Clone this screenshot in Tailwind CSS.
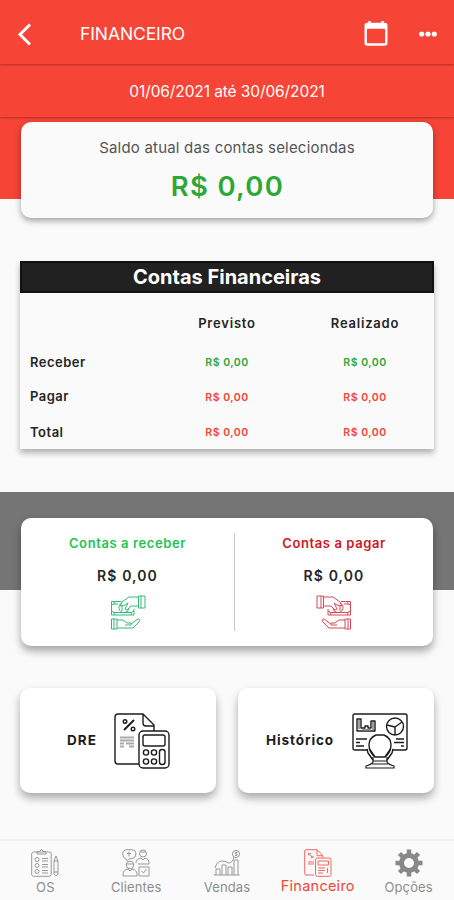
<!DOCTYPE html>
<html lang="pt-BR">
<head>
  <meta charset="UTF-8" />
  <meta name="viewport" content="width=device-width, initial-scale=1.0" />
  <title>Financeiro</title>
  <script src="https://cdn.jsdelivr.net/npm/@tailwindcss/browser@4"></script>
</head>
<body class="bg-[#fafafa] font-['Inter',sans-serif]">
  <div class="w-[454px] h-[900px] flex flex-col overflow-hidden">
    <!-- Top bar -->
    <header class="relative z-20 shrink-0 h-16 pt-[3px] bg-[#f64436] text-white flex items-center shadow-[0_1px_2px_rgba(0,0,0,0.3)]">
      <svg class="ml-[17px] w-4 h-6" viewBox="0 0 16 24" fill="none" stroke="currentColor" stroke-width="3"><path d="M13 2.5 3 12.5l10 10" /></svg>
      <h1 class="ml-[47px] text-[17.5px] leading-6 tracking-[-0.1px]">FINANCEIRO</h1>
      <svg class="ml-auto w-6 h-[27px]" viewBox="0 0 24 27" fill="none" stroke="currentColor"><rect x="1.7" y="4" width="20.6" height="20.5" rx="1.5" stroke-width="2.4" /><path d="M2 6.5h20" stroke-width="4.5" /><path d="M5.5 1v4M18.5 1v4" stroke-width="2.4" /></svg>
      <svg class="ml-[31px] mr-[17px] w-[18px] h-6" viewBox="0 0 18 24" fill="currentColor"><circle cx="2.7" cy="12" r="2.6" /><circle cx="9" cy="12" r="2.6" /><circle cx="15.3" cy="12" r="2.6" /></svg>
    </header>
    <div class="relative z-10 shrink-0 h-[53px] pt-0.5 bg-[#f64436] text-white flex items-center justify-center text-[15.5px] tracking-[-0.1px] shadow-[0_1px_2px_rgba(0,0,0,0.3)]">01/06/2021 até 30/06/2021</div>

    <main class="flex-1 flex flex-col">
      <section class="h-[82px] shrink-0 bg-[#f64436] px-[21px] pt-[5px]">
        <div class="relative h-24 rounded-[10px] bg-[#fafafa] flex flex-col items-center shadow-[0_3px_6px_rgba(0,0,0,0.35)]">
          <p class="mt-[14px] text-[15px] leading-6 tracking-[0.2px] text-[#555]">Saldo atual das contas seleciondas</p>
          <p class="mt-[10px] pl-px text-[27.5px] leading-8 font-semibold tracking-[1.3px] text-[#2fa737]">R$ 0,00</p>
        </div>
      </section>

      <!-- Contas financeiras -->
      <section class="mt-[62px] mx-5 h-[188px] shrink-0 bg-[#fafafa] shadow-[0_4px_6px_rgba(0,0,0,0.3)]">
        <h2 class="h-8 bg-[#212121] border-2 border-[#111] flex items-center justify-center text-white font-bold text-xl">Contas Financeiras</h2>
        <table class="w-full table-fixed text-[13px] tracking-[0.5px] font-semibold text-[#252525]">
          <thead>
            <tr class="h-[62px]">
              <th class="w-[138px]"></th>
              <th class="font-semibold tracking-[0.8px]">Previsto</th>
              <th class="font-semibold tracking-[0.8px]">Realizado</th>
            </tr>
          </thead>
          <tbody>
            <tr class="h-3">
              <td class="pl-2.5 leading-3">Receber</td>
              <td class="pt-0.5 text-center text-[10.5px] leading-3 text-[#2fa737]">R$ 0,00</td>
              <td class="pt-0.5 text-center text-[10.5px] leading-3 text-[#2fa737]">R$ 0,00</td>
            </tr>
            <tr class="h-[56px]">
              <td class="pl-2.5">Pagar</td>
              <td class="pt-0.5 text-center text-[10.5px] text-[#f64436]">R$ 0,00</td>
              <td class="pt-0.5 text-center text-[10.5px] text-[#f64436]">R$ 0,00</td>
            </tr>
            <tr class="h-3">
              <td class="pl-2.5 leading-3">Total</td>
              <td class="pt-0.5 text-center text-[10.5px] leading-3 text-[#f64436]">R$ 0,00</td>
              <td class="pt-0.5 text-center text-[10.5px] leading-3 text-[#f64436]">R$ 0,00</td>
            </tr>
          </tbody>
        </table>
      </section>

      <!-- Receber / pagar -->
      <section class="mt-[43px] h-[98px] shrink-0 bg-[#757575] px-[21px] pt-[26px]">
        <div class="relative h-32 rounded-[10px] bg-white flex items-center shadow-[0_5px_8px_rgba(0,0,0,0.35)]">
          <div class="w-[213px] h-full flex flex-col items-center">
            <p class="mt-[15px] text-[13px] leading-5 font-semibold tracking-[0.6px] text-[#1dc453]">Contas a receber</p>
            <p class="mt-[13px] text-[14px] leading-5 font-semibold tracking-[1.1px] text-[#252525]">R$ 0,00</p>
            <svg class="mt-[9px] w-9 h-9" viewBox="0 0 36 36" fill="none" stroke="#35b878" stroke-linejoin="round">
              <path d="M11 6.500H1.500v13.500H24V14M4 17.500h17M4 9h4M1.500 10q3 0 3-3.500M1.500 16q3 0 3 4M24 16q-3 0-3 4M12 8a5 5 0 1 0 7 5M12 11v5" />
              <path d="M28.500 2H19l-7 5-2 4 5-1 3-2-3 6 2 1 4-4h7.500zM28.500 1H35v12h-6.500zM31 1v12" />
              <path d="M1.500 24H7v10H1.500zM4 24v10M7 25h6l4 3h4v2h-6M21 29l7-5q3 0 1 3l-6 6H7" />
            </svg>
          </div>
          <div class="w-px h-[98px] bg-[#c8c8c8]"></div>
          <div class="flex-1 h-full flex flex-col items-center">
            <p class="mt-[15px] text-[13px] leading-5 font-semibold tracking-[0.6px] text-[#d0161f]">Contas a pagar</p>
            <p class="mt-[13px] text-[14px] leading-5 font-semibold tracking-[1.1px] text-[#252525]">R$ 0,00</p>
            <svg class="mt-[9px] w-9 h-9 -scale-x-100" viewBox="0 0 36 36" fill="none" stroke="#d64a55" stroke-linejoin="round">
              <path d="M11 6.500H1.500v13.500H24V14M4 17.500h17M4 9h4M1.500 10q3 0 3-3.500M1.500 16q3 0 3 4M24 16q-3 0-3 4M12 8a5 5 0 1 0 7 5M12 11v5" />
              <path d="M28.500 2H19l-7 5-2 4 5-1 3-2-3 6 2 1 4-4h7.500zM28.500 1H35v12h-6.500zM31 1v12" />
              <path d="M1.500 24H7v10H1.500zM4 24v10M7 25h6l4 3h4v2h-6M21 29l7-5q3 0 1 3l-6 6H7" />
            </svg>
          </div>
        </div>
      </section>

      <div class="mt-[98px] mx-5 grid grid-cols-2 gap-[22px]">
        <div class="h-[105px] rounded-[10px] bg-white flex items-center pl-[47px] shadow-[0_5px_8px_rgba(0,0,0,0.32)]">
          <span class="w-[47px] text-[13.5px] font-bold tracking-[1.1px] text-[#1c1c1c]">DRE</span>
          <svg class="w-14 h-14" viewBox="0 0 56 56" fill="none" stroke="#1c1c1c" stroke-width="1.4" stroke-linejoin="round">
            <path d="M25 51H4q-3 0-3-3V4q0-3 3-3h25l11 11v6M29 1v9q0 3 3 3h8" />
            <path d="m10 17 10-10" stroke-width="2" /><circle cx="11" cy="8.500" r="1.800" /><circle cx="19" cy="16" r="1.800" />
            <path d="M6 24.500h14M6 27.500h14M6 30.500h4M12 30.500h8M6 33.500h4M15 33.500h5" stroke="#aaa" stroke-width="2" />
            <rect x="25" y="18" width="30" height="37" rx="4" /><rect x="29" y="22" width="22" height="11" rx="2" />
            <circle cx="32" cy="39.500" r="2.600" /><circle cx="40" cy="39.500" r="2.600" /><circle cx="32" cy="48.500" r="2.600" /><circle cx="40" cy="48.500" r="2.600" /><rect x="45.500" y="36.500" width="5.500" height="15" rx="2.500" />
          </svg>
        </div>
        <div class="h-[105px] rounded-[10px] bg-white flex items-center pl-7 shadow-[0_5px_8px_rgba(0,0,0,0.32)]">
          <span class="w-[86px] text-[13.5px] font-bold tracking-[0.9px] text-[#1c1c1c]">Histórico</span>
          <svg class="w-14 h-14" viewBox="0 0 56 56" fill="none" stroke="#1c1c1c" stroke-width="1.4" stroke-linejoin="round">
            <path d="M16 37H3q-2 0-2-2V3q0-2 2-2h50q2 0 2 2v32q0 2-2 2H40" />
            <path d="M5 18V6h4v9h4v-2h3v2h3V8h4v10z" /><path d="M7 7v9M21 9v8M10 17h9" stroke="#777" />
            <circle cx="43" cy="13.500" r="8.500" /><path d="M43 22v-8l7-5M43 14l-8-2" />
            <path d="M4 26h11M4 29.500h4M4 33h8M44 26h8M42 29.500h10M49 33h3" />
            <path d="M24 22h8q7 3 7 10 0 7-6 12H23q-6-5-6-12 0-7 7-10z" />
            <path d="m15 36 1 4 5 7M17.500 36l5.500 8M41 36l-1 4-5 7M38.500 36 33 44" />
            <path d="M21 44v5q-2 3-7 4v2h28v-2q-5-1-7-4v-5M21 48h14M20 51h16" stroke-width="1.2" />
          </svg>
        </div>
      </div>
    </main>

    <!-- Bottom navigation -->
    <nav class="shrink-0 h-[61px] border-t-2 border-[#f1f1f1] bg-[#fafafa] grid grid-cols-5 text-center text-[13px] leading-4 text-[#8d8d8d]">
      <a class="flex flex-col items-center pt-2">
        <svg class="w-7 h-7" viewBox="0 0 28 28" fill="none" stroke="#999" stroke-linejoin="round"><rect x=".7" y="3" width="19.500" height="24.300" rx="2" /><path d="M6 5V2.500h2.500L10.500.7l2 1.800H15V5zM11 9.500h6M11 12h6M11 15.500h6M11 18h6M11 21.500h6M11 24h6M23 12l2-5 2 5v13l-2 2-2-2zM23 12h4M23 23h4" /><circle cx="6" cy="10.500" r="2" /><circle cx="6" cy="16.500" r="2" /><circle cx="6" cy="22.500" r="2" /></svg>
        <span class="mt-0.5 tracking-[0.2px]">OS</span>
      </a>
      <a class="flex flex-col items-center pt-2">
        <svg class="w-7 h-7" viewBox="0 0 28 28" fill="none" stroke="#999" stroke-linejoin="round"><path d="M4 10Q.7 9 .7 5T5 .7h5q4 0 4 4t-4 5H7l-2 2zM7 2.500v5M5 4.500h4" /><circle cx="21" cy="4.500" r="3.500" /><path d="M14 14v-1q0-3 5-4l2 2 2-2q4 1 4 4v2H16M18 3h6" /><circle cx="8" cy="16" r="3.800" /><path d="M1 27v-2q0-4 5-5l2 2 2-2q5 1 5 5v2zM4 15h8" /><path d="M17 18h10v9H17zM19.500 22l2 2 3-4" /></svg>
        <span class="mt-0.5 tracking-[0.1px]">Clientes</span>
      </a>
      <a class="flex flex-col items-center pt-2">
        <svg class="w-7 h-7" viewBox="0 0 28 28" fill="none" stroke="#999" stroke-linejoin="round"><path d="M.7 26h26M3 26v-6h4v6M9 26V16h4v10M15 26v-8h4v8M21 26V11h4v15M2 19q2-7 7-7t6 2q5 0 6-6" /><circle cx="23" cy="5" r="3.600" /><path d="M24.500 3.500h-2V5h1.500v1.500h-2" /></svg>
        <span class="mt-0.5 tracking-[0.1px]">Vendas</span>
      </a>
      <a class="flex flex-col items-center pt-2 text-[#f64436]">
        <svg class="w-7 h-7" viewBox="0 0 28 28" fill="none" stroke="#f4675e" stroke-linejoin="round"><path d="M10 26H2q-1.300 0-1.300-1.300V2Q.7.700 2 .7h11l5.500 5.500V8M13 .7v6h5.500M4 4l5 5M4 6l3-2M7 9l3-2M4 13h6M4 15h6" /><rect x="11.500" y="9" width="15.500" height="18.300" rx="2" /><path d="M14 12h10.500v4H14zM14 19h7M14 21.500h7M14 24h5M23.500 19v5" /></svg>
        <span class="mt-px text-[14.500px] tracking-[0.25px]">Financeiro</span>
      </a>
      <a class="flex flex-col items-center pt-2">
        <svg class="w-7 h-7" viewBox="0 0 28 28" fill="none" stroke="#888"><circle cx="14" cy="14" r="7.500" stroke-width="5" /><path d="M14 .5v5M14 22.500v5M.5 14h5M22.500 14h5M4.500 4.500 8 8M20 20l3.500 3.500M4.500 23.500 8 20M20 8l3.500-3.500" stroke-width="4.500" /></svg>
        <span class="mt-0.5 tracking-[0.1px]">Opções</span>
      </a>
    </nav>
  </div>
</body>
</html>
